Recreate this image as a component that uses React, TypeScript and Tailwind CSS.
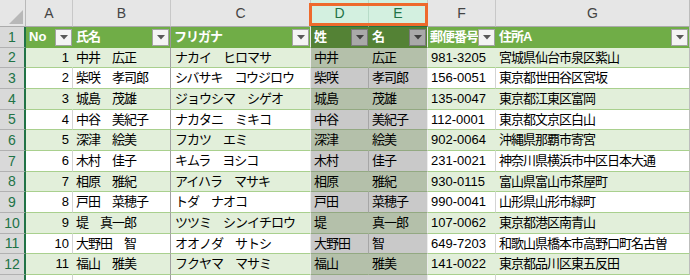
import React from 'react';

interface Person {
  no: number;
  sei: string;
  mei: string;
  kana: string;
  zip: string;
  addr: string;
}

const people: Person[] = [
  { no: 1, sei: '中井', mei: '広正', kana: 'ナカイ　ヒロマサ', zip: '981-3205', addr: '宮城県仙台市泉区紫山' },
  { no: 2, sei: '柴咲', mei: '孝司郎', kana: 'シバサキ　コウジロウ', zip: '156-0051', addr: '東京都世田谷区宮坂' },
  { no: 3, sei: '城島', mei: '茂雄', kana: 'ジョウシマ　シゲオ', zip: '135-0047', addr: '東京都江東区富岡' },
  { no: 4, sei: '中谷', mei: '美紀子', kana: 'ナカタニ　ミキコ', zip: '112-0001', addr: '東京都文京区白山' },
  { no: 5, sei: '深津', mei: '絵美', kana: 'フカツ　エミ', zip: '902-0064', addr: '沖縄県那覇市寄宮' },
  { no: 6, sei: '木村', mei: '佳子', kana: 'キムラ　ヨシコ', zip: '231-0021', addr: '神奈川県横浜市中区日本大通' },
  { no: 7, sei: '相原', mei: '雅紀', kana: 'アイハラ　マサキ', zip: '930-0115', addr: '富山県富山市茶屋町' },
  { no: 8, sei: '戸田', mei: '菜穂子', kana: 'トダ　ナオコ', zip: '990-0041', addr: '山形県山形市緑町' },
  { no: 9, sei: '堤', mei: '真一郎', kana: 'ツツミ　シンイチロウ', zip: '107-0062', addr: '東京都港区南青山' },
  { no: 10, sei: '大野田', mei: '智', kana: 'オオノダ　サトシ', zip: '649-7203', addr: '和歌山県橋本市高野口町名古曽' },
  { no: 11, sei: '福山', mei: '雅美', kana: 'フクヤマ　マサミ', zip: '141-0022', addr: '東京都品川区東五反田' },
];

// row heights so the 12 rows land on the screenshot's ~20.7px pitch
const heights = ['h-[20px]', 'h-[21px]', 'h-[21px]', 'h-[20px]', 'h-[21px]', 'h-[21px]', 'h-[20px]', 'h-[21px]', 'h-[21px]', 'h-[20px]', 'h-[21px]'];

const base = 'box-border h-full shrink-0 flex items-center overflow-hidden whitespace-nowrap border-b';
const jp = 'text-[13px] tracking-[-1px]';

const FilterButton = ({ selected = false }: { selected?: boolean }) => (
  <span
    className={
      selected
        ? 'ml-auto mr-[1px] w-[17px] h-[17px] box-border border border-[#7a7a7a] bg-[#a9a9a9] flex items-center justify-center'
        : 'ml-auto mr-[1px] w-[17px] h-[17px] box-border border border-[#a3a3a3] bg-[#f4f4f4] flex items-center justify-center'
    }
  >
    <svg width="8" height="5" viewBox="0 0 8 5">
      <path d="M0 0 H8 L4 4.5 Z" fill={selected ? '#3f3f3f' : '#595959'} />
    </svg>
  </span>
);

const LetterHeader = () => (
  <div className="flex h-[27px] bg-[#e6e6e6] text-[14px] text-[#444]">
    <div className="box-border h-full w-[26px] shrink-0 border-r border-b border-r-[#b9b9b9] border-b-[#ababab] relative overflow-hidden">
      <svg className="absolute right-[2px] bottom-[2px]" width="14" height="14" viewBox="0 0 14 14">
        <path d="M14 0 V14 H0 Z" fill="#b8b8b8" />
      </svg>
    </div>
    <div className="box-border h-full w-[47px] shrink-0 flex items-center justify-center border-r border-b border-r-[#c8c8c8] border-b-[#ababab]">A</div>
    <div className="box-border h-full w-[98px] shrink-0 flex items-center justify-center border-r border-b border-r-[#c8c8c8] border-b-[#ababab]">B</div>
    <div className="box-border h-full w-[140px] shrink-0 flex items-center justify-center border-r border-b border-r-[#c8c8c8] border-b-[#ababab]">C</div>
    <div className="box-border h-full w-[58px] shrink-0 flex items-center justify-center border-r border-b bg-[#d3f0e0] text-[#217346] border-r-[#b7dcc8] border-b-[#217346]">D</div>
    <div className="box-border h-full w-[59px] shrink-0 flex items-center justify-center border-r border-b bg-[#d3f0e0] text-[#217346] border-r-[#c8c8c8] border-b-[#217346]">E</div>
    <div className="box-border h-full w-[68px] shrink-0 flex items-center justify-center border-r border-b border-r-[#c8c8c8] border-b-[#ababab]">F</div>
    <div className="box-border h-full w-[194px] shrink-0 flex items-center justify-center border-r border-b border-r-[#bdbdbd] border-b-[#ababab]">G</div>
  </div>
);

const TableHeader = () => (
  <div className="flex h-[21px] text-white font-bold text-[13px]">
    <div className={`${base} w-[26px] justify-center bg-[#d9d9d9] border-r-2 border-r-[#217346] border-b-[#b1b1b1] text-[#217346] font-normal text-[14px]`}>1</div>
    <div className={`${base} w-[47px] pl-[3px] bg-[#70ad47] border-b-[#70ad47]`}>
      No
      <FilterButton />
    </div>
    <div className={`${base} w-[98px] pl-[3px] bg-[#70ad47] border-r border-r-[#9a9a9a] border-b-[#70ad47] ${jp}`}>
      氏名
      <FilterButton />
    </div>
    <div className={`${base} w-[140px] pl-[3px] bg-[#70ad47] border-r border-r-[#e8e8e8] border-b-[#70ad47] ${jp}`}>
      フリガナ
      <FilterButton />
    </div>
    <div className={`${base} w-[58px] pl-[3px] bg-[#548235] border-b-[#548235] ${jp}`}>
      姓
      <FilterButton selected />
    </div>
    <div className={`${base} w-[59px] pl-[3px] bg-[#548235] border-r border-r-[#e8e8e8] border-b-[#548235] ${jp}`}>
      名
      <FilterButton selected />
    </div>
    <div className={`${base} w-[68px] pl-[2px] bg-[#70ad47] border-b-[#70ad47] ${jp}`}>
      郵便番号
      <FilterButton />
    </div>
    <div className={`${base} w-[194px] pl-[3px] bg-[#70ad47] border-r border-r-[#bdbdbd] border-b-[#70ad47] ${jp}`}>
      住所A
      <FilterButton />
    </div>
  </div>
);

const DataRow = ({ p, index }: { p: Person; index: number }) => {
  const tinted = index % 2 === 0;
  return (
    <div className={`flex ${heights[index]} text-[13px] text-black`}>
      <div className={`${base} w-[26px] justify-center bg-[#d9d9d9] border-r-2 border-r-[#217346] border-b-[#b1b1b1] text-[#217346] text-[14px]`}>
        {index + 2}
      </div>
      <div
        className={
          tinted
            ? `${base} w-[47px] justify-end pr-[3px] bg-[#e2efda] border-r border-r-[#e2efda] border-b-[#a9d08e]`
            : `${base} w-[47px] justify-end pr-[3px] bg-white border-r border-r-[#d4d4d4] border-b-[#a9d08e]`
        }
      >
        {p.no}
      </div>
      <div className={`${base} w-[98px] pl-[3px] border-r border-r-[#a0a0a0] border-b-[#a9d08e] ${tinted ? 'bg-[#e2efda]' : 'bg-white'} ${jp}`}>
        {p.sei}　{p.mei}
      </div>
      <div className={`${base} w-[140px] pl-[4px] border-r border-r-[#ececec] border-b-[#a9d08e] ${tinted ? 'bg-[#e2efda]' : 'bg-white'} ${jp}`}>
        {p.kana}
      </div>
      <div
        className={
          tinted
            ? `${base} w-[58px] pl-[3px] bg-[#b4c0aa] border-r border-r-[#b4c0aa] border-b-[#93a982] ${jp}`
            : `${base} w-[58px] pl-[3px] bg-[#c9c9c9] border-r border-r-[#a6a6a6] border-b-[#93a982] ${jp}`
        }
      >
        {p.sei}
      </div>
      <div className={`${base} w-[59px] pl-[3px] border-r border-r-[#ececec] border-b-[#93a982] ${tinted ? 'bg-[#b4c0aa]' : 'bg-[#c9c9c9]'} ${jp}`}>
        {p.mei}
      </div>
      <div
        className={
          tinted
            ? `${base} w-[68px] pl-[3px] bg-[#e2efda] border-r border-r-[#e2efda] border-b-[#a9d08e]`
            : `${base} w-[68px] pl-[3px] bg-white border-r border-r-[#d4d4d4] border-b-[#a9d08e]`
        }
      >
        {p.zip}
      </div>
      <div className={`${base} w-[194px] pl-[3px] border-r border-r-[#bdbdbd] border-b-[#a9d08e] ${tinted ? 'bg-[#e2efda]' : 'bg-white'} ${jp}`}>
        {p.addr}
      </div>
    </div>
  );
};

const App: React.FC = () => (
  <div className="relative w-[690px] h-[280px] overflow-hidden bg-white font-['Liberation_Sans','Noto_Sans_CJK_JP',sans-serif]">
    <LetterHeader />
    <TableHeader />
    {people.map((p, i) => (
      <DataRow key={p.no} p={p} index={i} />
    ))}
    <div className="flex h-[21px]">
      <div className="box-border h-full w-[26px] shrink-0 bg-[#d9d9d9] border-r-2 border-r-[#217346]" />
      <div className="box-border h-full w-[47px] shrink-0 border-r border-r-[#d4d4d4]" />
      <div className="box-border h-full w-[98px] shrink-0 border-r border-r-[#a0a0a0]" />
      <div className="box-border h-full w-[140px] shrink-0 border-r border-r-[#ececec]" />
      <div className="box-border h-full w-[117px] shrink-0 bg-[#c9c9c9] border-r border-r-[#ececec]" />
      <div className="box-border h-full w-[68px] shrink-0 border-r border-r-[#d4d4d4]" />
    </div>
    {/* orange highlight around the selected column letters */}
    <div className="absolute left-[309px] top-[3px] w-[119px] h-[23px] box-border border-[3px] border-[#ee6a2c]" />
  </div>
);

export default App;
